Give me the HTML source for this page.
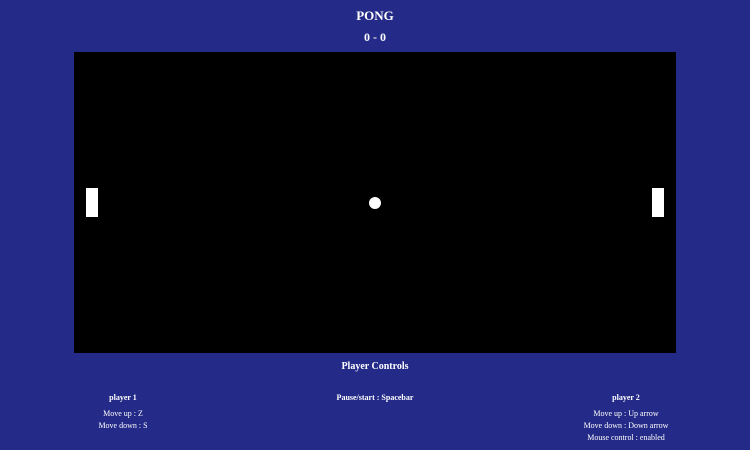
<!DOCTYPE html><html><head><style>
body{margin:0;width:750px;height:450px;background:#232a87;font-family:"Liberation Serif",serif;color:#fff;position:relative;overflow:hidden}
.t{position:absolute;white-space:nowrap;transform:translateX(-50%)}
.b{font-weight:bold}
</style></head><body>
<div class="t b" style="left:375px;top:8px;font-size:13px">PONG</div>
<div class="t b" style="left:375px;top:30px;font-size:12px">0 - 0</div>
<div style="position:absolute;left:74px;top:52px;width:602px;height:301px;background:#000"></div>
<div style="position:absolute;left:86px;top:188px;width:12px;height:29px;background:#fff"></div>
<div style="position:absolute;left:652px;top:188px;width:12px;height:29px;background:#fff"></div>
<div style="position:absolute;left:369px;top:197px;width:12px;height:12px;border-radius:50%;background:#fff"></div>
<div class="t b" style="left:375px;top:361px;font-size:10px">Player Controls</div>
<div class="t b" style="left:123px;top:393px;font-size:8px">player 1</div>
<div class="t" style="left:123px;top:409px;font-size:8px">Move up : Z</div>
<div class="t" style="left:123px;top:421px;font-size:8px">Move down : S</div>
<div class="t b" style="left:375px;top:393px;font-size:8px">Pause/start : Spacebar</div>
<div class="t b" style="left:626px;top:393px;font-size:8px">player 2</div>
<div class="t" style="left:626px;top:409px;font-size:8px">Move up : Up arrow</div>
<div class="t" style="left:626px;top:421px;font-size:8px">Move down : Down arrow</div>
<div class="t" style="left:626px;top:433px;font-size:8px">Mouse control : enabled</div>
</body></html>
